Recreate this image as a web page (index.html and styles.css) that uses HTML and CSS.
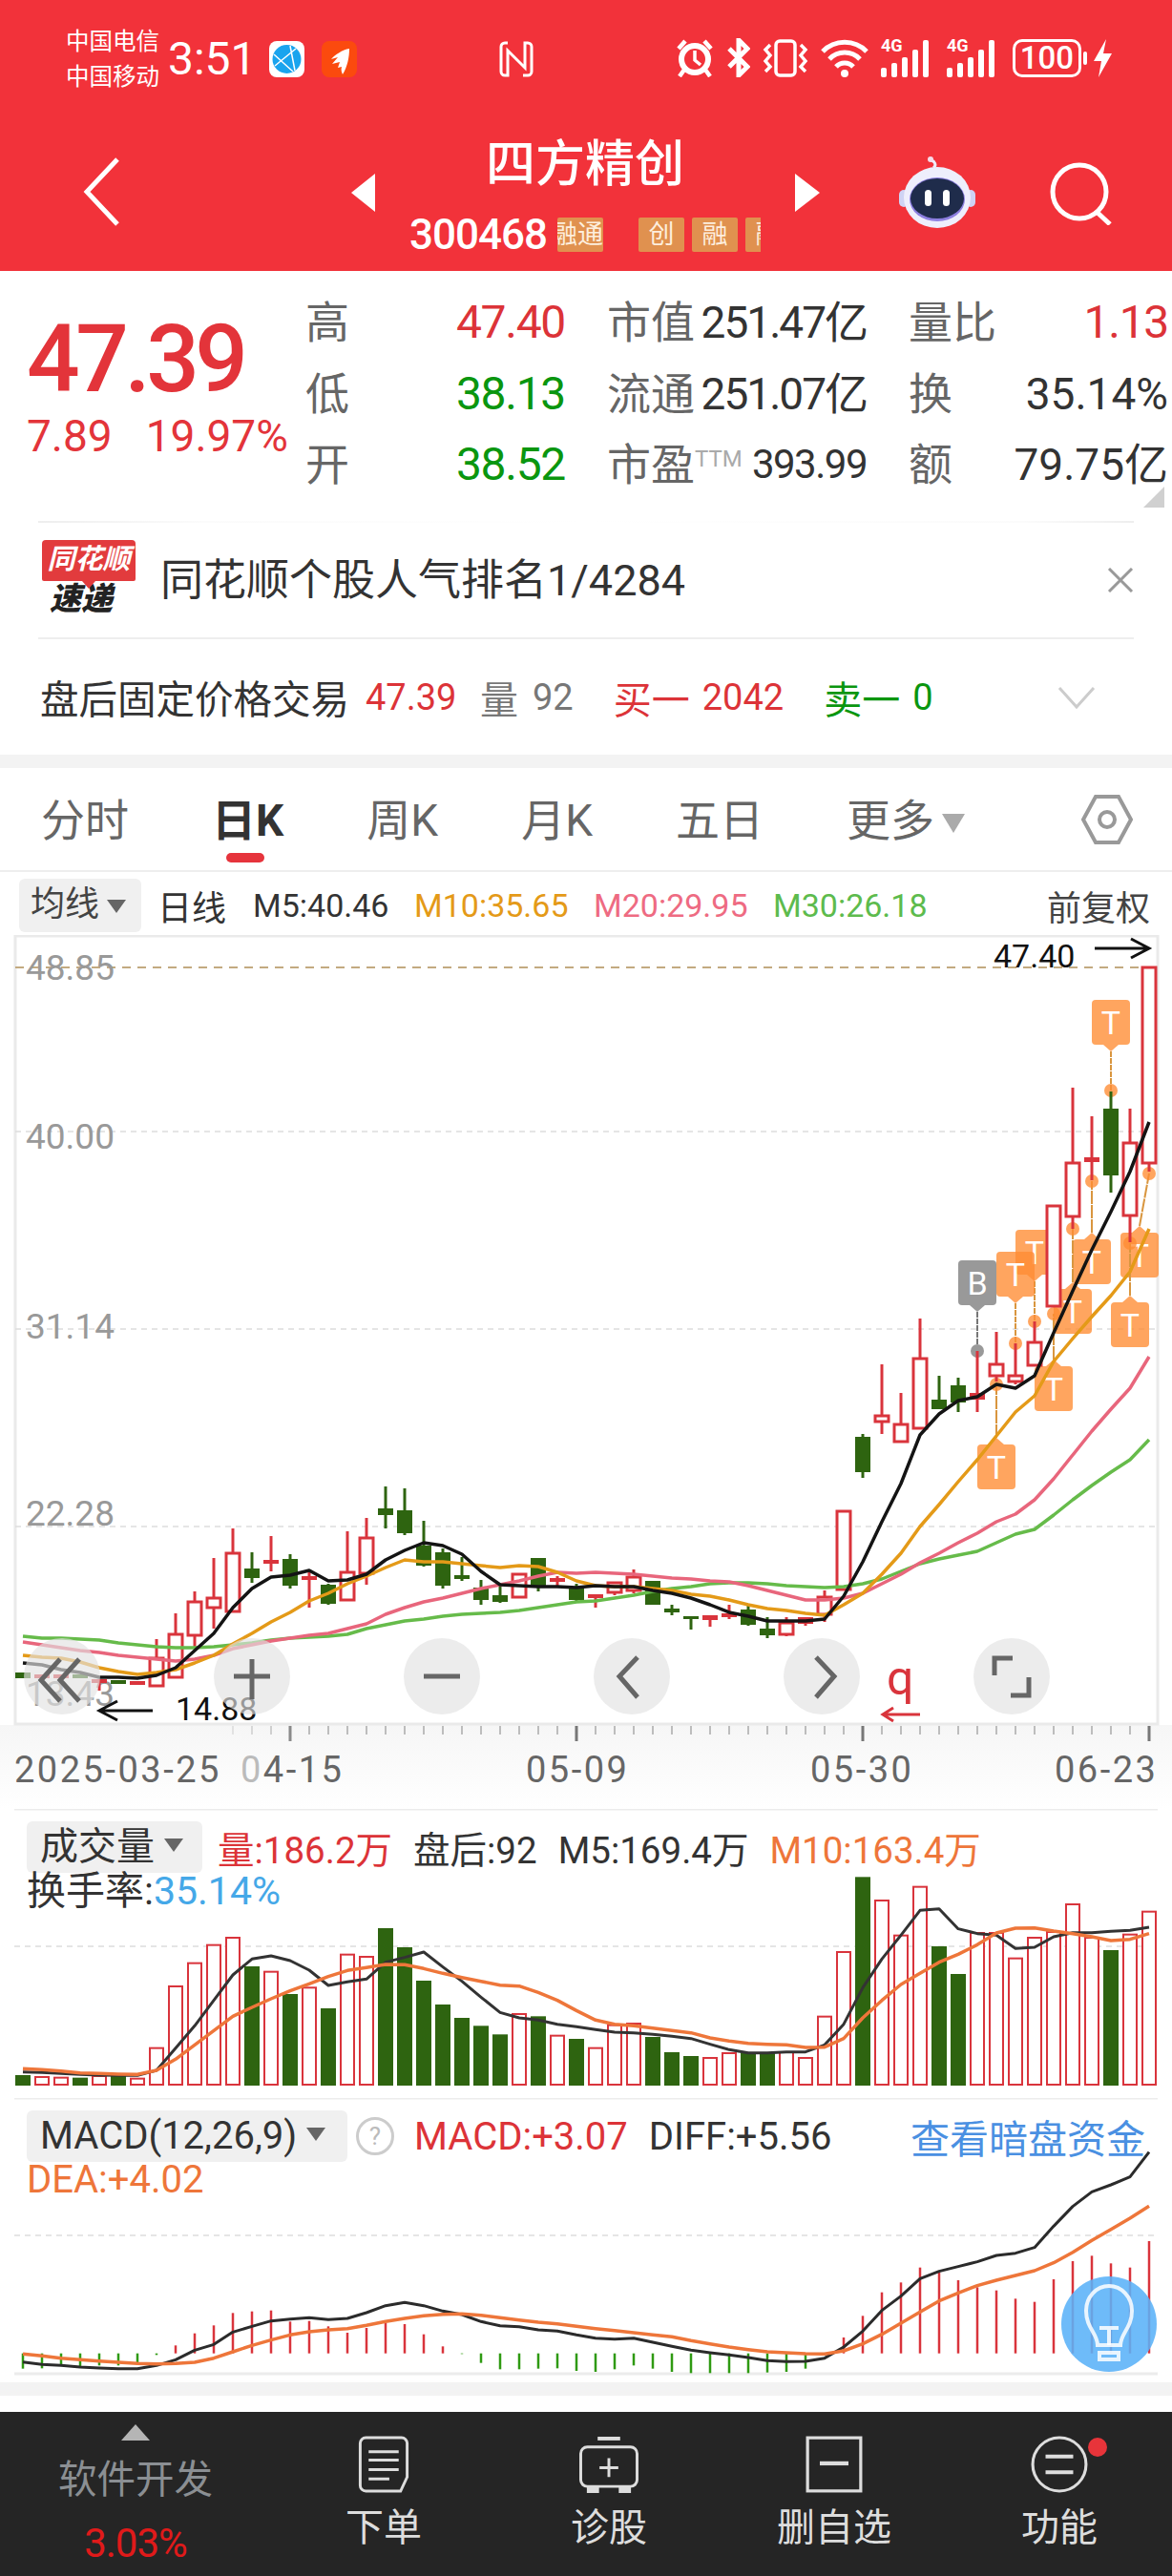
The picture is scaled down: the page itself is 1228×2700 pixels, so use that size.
FILE: index.html
```html
<!DOCTYPE html>
<html lang="zh-CN">
  <head>
    <meta charset="UTF-8" />
    <meta name="viewport" content="width=device-width, initial-scale=1.0" />
    <title>四方精创</title>
    <link rel="stylesheet" href="styles.css">
  </head>
  <body>
    <header class="top">
      <div class="status">
        <div class="status-left">
          <div class="carriers"><div>中国电信</div><div>中国移动</div></div>
          <span class="clock">3:51</span>
          <svg class="app-icon" viewBox="0 0 37 38"><rect width="37" height="38" rx="8" fill="#fff"/><circle cx="18.500" cy="19" r="15" fill="#1aa4ee"/><path d="M5 14l20 18M6 26L28 8M22 5l5 26" stroke="#fff" stroke-width="1.500" fill="none"/></svg>
          <svg class="app-icon" viewBox="0 0 37 38"><rect width="37" height="38" rx="8" fill="#fb4a0e"/><path d="M29 8C22 9 13 15 10 19l7-2-6 7 8-2-2 6 4-1c-1 3 0 6 1 8 5-8 7-18 7-27z" fill="#fff"/></svg>
        </div>
        <svg class="nfc" viewBox="0 0 36 38" fill="none" stroke="#fff" stroke-width="3"><path d="M9 2H6a4 4 0 0 0-4 4v26a4 4 0 0 0 4 4h3V10l18 18V2h3a4 4 0 0 1 4 4v26a4 4 0 0 1-4 4h-5"/></svg>
        <div class="status-right">
          <svg width="40" height="41" viewBox="0 0 40 41" fill="none" stroke="#fff"><circle cx="20" cy="22" r="14" stroke-width="6"/><path d="M20 13v10l6 5" stroke-width="3.500"/><path d="M3 11L10 3M37 11L30 3M9 33l-5 7M31 33l5 7" stroke-width="4.500"/></svg>
          <svg width="25" height="41" viewBox="0 0 25 41" fill="none" stroke="#fff" stroke-width="5"><path d="M3 11l19 19-9 9V2l9 9L3 30"/></svg>
          <svg width="48" height="40" viewBox="0 0 48 40" fill="none" stroke="#fff" stroke-width="3.500"><rect x="14" y="2" width="20" height="36" rx="4"/><path d="M8 6l-5 5 5 6-5 6 5 6-5 5M40 6l5 5-5 6 5 6-5 6 5 5"/></svg>
          <svg width="50" height="40" viewBox="0 0 50 40" fill="none" stroke="#fff" stroke-width="5"><path d="M2 13a32 32 0 0 1 46 0M9 21a22 22 0 0 1 32 0M16 29a12 12 0 0 1 18 0"/><circle cx="25" cy="36" r="4" fill="#fff" stroke="none"/></svg>
          <div class="signal"><span class="net">4G</span><i class="b1"></i><i class="b2"></i><i class="b3"></i><i class="b4"></i><i class="b5"></i></div>
          <div class="signal"><span class="net">4G</span><i class="b1"></i><i class="b2"></i><i class="b3"></i><i class="b4"></i><i class="b5"></i></div>
          <div class="battery"><span>100</span></div>
          <svg width="19" height="40" viewBox="0 0 19 40"><polygon points="13,0 0,23 8,23 5,40 19,15 10,15" fill="#fff"/></svg>
        </div>
      </div>
      <div class="titlebar">
        <svg class="back" viewBox="0 0 38 72" fill="none" stroke="#fff" stroke-width="5"><path d="M36 2L4 36l32 34"/></svg>
        <div class="arrow arrow-left"></div>
        <div class="title-stack">
          <div class="stock-name">四方精创</div>
          <div class="stock-sub">
            <span class="stock-code">300468</span>
            <div class="tags">
              <span class="tag tag-cut">融通</span>
              <span class="tag tag-gap">创</span>
              <span class="tag">融</span>
              <span class="tag">融</span>
            </div>
          </div>
        </div>
        <div class="arrow arrow-right"></div>
        <svg class="robot" viewBox="0 0 80 76">
          <path d="M36 13c4-3 1-7-2-8" stroke="#eef" stroke-width="3" fill="none"/>
          <circle cx="33" cy="4" r="3" fill="#f6dbe8"/>
          <rect x="0" y="36" width="10" height="18" rx="5" fill="#cfd3f4"/>
          <rect x="70" y="36" width="10" height="18" rx="5" fill="#cfd3f4"/>
          <ellipse cx="40" cy="44" rx="35" ry="32" fill="#eeeefc"/>
          <ellipse cx="40" cy="46" rx="29" ry="23" fill="#8d7fe0"/>
          <ellipse cx="40" cy="45" rx="28" ry="21" fill="#1f2c4b"/>
          <rect x="27" y="36" width="7" height="17" rx="3.500" fill="#fff"/>
          <rect x="46" y="36" width="7" height="17" rx="3.500" fill="#fff"/>
        </svg>
        <svg class="search" viewBox="0 0 65 66" fill="none" stroke="#fff" stroke-width="5"><circle cx="31" cy="31" r="28"/><path d="M49 52l14 13"/></svg>
      </div>
    </header>

    <section class="quote">
      <div class="price-box">
        <div class="price">47.39</div>
        <div class="change"><span>7.89</span><span>19.97%</span></div>
      </div>
      <div class="quote-grid">
        <div class="cell"><span class="lab">高</span><span class="val red">47.40</span></div>
        <div class="cell"><span class="lab">市值</span><span class="val dark tight">251.47亿</span></div>
        <div class="cell"><span class="lab">量比</span><span class="val red">1.13</span></div>
        <div class="cell"><span class="lab">低</span><span class="val green">38.13</span></div>
        <div class="cell"><span class="lab">流通</span><span class="val dark tight">251.07亿</span></div>
        <div class="cell"><span class="lab">换</span><span class="val dark">35.14%</span></div>
        <div class="cell"><span class="lab">开</span><span class="val green">38.52</span></div>
        <div class="cell"><span class="lab">市盈<sup class="ttm">TTM</sup></span><span class="val dark small">393.99</span></div>
        <div class="cell"><span class="lab">额</span><span class="val dark">79.75亿</span></div>
      </div>
      <div class="corner"></div>
    </section>

    <div class="fade-line"></div>

    <section class="notice">
      <div class="logo">
        <div class="logo-red">同花顺</div>
        <div class="logo-black">速递</div>
      </div>
      <div class="notice-text">同花顺个股人气排名1/4284</div>
      <svg class="close" viewBox="0 0 28 26" fill="none" stroke="#999" stroke-width="3"><path d="M2 1l24 24M26 1L2 25"/></svg>
    </section>

    <section class="after">
      <span class="after-title">盘后固定价格交易</span>
      <span class="red after-price">47.39</span>
      <span class="gray after-vol">量</span>
      <span class="gray after-num">92</span>
      <span class="red after-buy">买一</span>
      <span class="red after-num">2042</span>
      <span class="green after-buy">卖一</span>
      <span class="green after-num">0</span>
      <svg class="after-chev" viewBox="0 0 40 24" fill="none" stroke="#ccc" stroke-width="3"><path d="M2 2l18 20L38 2"/></svg>
    </section>

    <div class="band"></div>

    <nav class="tabs">
      <span class="tab">分时</span>
      <span class="tab active">日K</span>
      <span class="tab">周K</span>
      <span class="tab">月K</span>
      <span class="tab">五日</span>
      <span class="tab more">更多<i class="tri tri-tab"></i></span>
      <svg class="hex" viewBox="0 0 54 54" fill="none" stroke="#999" stroke-width="4"><path d="M15 3h24l13 24-13 24H15L2 27z"/><circle cx="27" cy="27" r="8"/></svg>
    </nav>

    <div class="legend">
      <span class="legend-btn">均线<i class="tri"></i></span>
      <span class="legend-day">日线</span>
      <span class="ma ma5">M5:40.46</span>
      <span class="ma ma10">M10:35.65</span>
      <span class="ma ma20">M20:29.95</span>
      <span class="ma ma30">M30:26.18</span>
      <span class="fq">前复权</span>
    </div>

    <section class="kline">
      <svg id="kline-svg" class="chart" viewBox="0 980 1228 916" width="1228" height="916">
        <defs>
          <linearGradient id="axis-bg" x1="0" y1="0" x2="0" y2="1"><stop offset="0" stop-color="#f6f6f6"/><stop offset="1" stop-color="#fff"/></linearGradient>
        </defs>
        <rect x="0" y="1808" width="1228" height="88" fill="url(#axis-bg)"/>
        <rect x="16" y="981" width="1197" height="826" fill="none" stroke="#eaeaea" stroke-width="3"/>
        <line class="grid-top" x1="16" y1="1014" x2="1213" y2="1014"/>
        <line class="grid" x1="16" y1="1186" x2="1213" y2="1186"/>
        <line class="grid" x1="16" y1="1393" x2="1213" y2="1393"/>
        <line class="grid" x1="16" y1="1600" x2="1213" y2="1600"/>
        <text class="scale" x="27" y="1027">48.85</text>
        <text class="scale" x="27" y="1204">40.00</text>
        <text class="scale" x="27" y="1403">31.14</text>
        <text class="scale" x="27" y="1599">22.28</text>
        <text class="scale" x="27" y="1788">13.43</text>
        <g id="marks"></g>
        <g id="candles"></g>
        <g id="ma-lines"></g>
        <text class="hilo" x="1041" y="1014">47.40</text>
        <path class="hilo-arrow" d="M1147 994h56M1185 984l19 10-19 10"/>
        <text class="hilo" x="184" y="1803">14.88</text>
        <path class="hilo-arrow" d="M160 1793h-56M123 1783l-19 10 19 10"/>
        <text class="mark-q" x="929" y="1776">q</text>
        <path class="q-arrow" d="M964 1797h-38M936 1790l-11 7 11 7"/>
        <g id="ticks"></g>
        <text class="date" x="15" y="1868">2025-03-25</text>
        <text class="date" x="252" y="1868"><tspan class="date-fade">0</tspan>4-15</text>
        <text class="date" x="551" y="1868">05-09</text>
        <text class="date" x="849" y="1868">05-30</text>
        <text class="date" x="1105" y="1868">06-23</text>
      </svg>
      <div class="zoom-btns">
        <div class="zoom-btn"><svg viewBox="0 0 80 80"><path d="M38 22L18 44l20 22M58 22L38 44l20 22"/></svg></div>
        <div class="zoom-btn"><svg viewBox="0 0 80 80"><path d="M40 22v42M21 40h38"/></svg></div>
        <div class="zoom-btn"><svg viewBox="0 0 80 80"><path d="M21 40h38"/></svg></div>
        <div class="zoom-btn"><svg viewBox="0 0 80 80"><path d="M46 20L27 40l19 22"/></svg></div>
        <div class="zoom-btn"><svg viewBox="0 0 80 80"><path d="M34 20l19 20-19 22"/></svg></div>
        <div class="zoom-btn"><svg viewBox="0 0 80 80"><path d="M22 39V21h19M58 41v19H39"/></svg></div>
      </div>
    </section>

    <section class="volume">
      <svg id="vol-svg" class="chart" viewBox="0 1896 1228 303" width="1228" height="303">
        <line class="panel-line" x1="15" y1="1896" x2="1213" y2="1896"/>
        <line class="grid" x1="15" y1="2040" x2="1213" y2="2040"/>
        <g id="vol-bars"></g>
        <g id="vol-lines"></g>
      </svg>
      <div class="panel-head">
        <div class="head-row">
          <span class="panel-btn btn-vol">成交量<i class="tri tri-small"></i></span>
          <span class="red">量:186.2万</span>
          <span class="dark">盘后:92</span>
          <span class="dark">M5:169.4万</span>
          <span class="orange">M10:163.4万</span>
        </div>
        <div class="head-row2 turnover"><span class="dark">换手率:</span><span class="blue">35.14%</span></div>
      </div>
    </section>

    <section class="macd">
      <svg id="macd-svg" class="chart" viewBox="0 2199 1228 298" width="1228" height="298">
        <line class="panel-line" x1="15" y1="2199" x2="1213" y2="2199"/>
        <line class="panel-line" x1="15" y1="2488" x2="1213" y2="2488"/>
        <line class="grid" x1="15" y1="2343" x2="1213" y2="2343"/>
        <g id="macd-bars"></g>
        <g id="macd-lines"></g>
      </svg>
      <div class="panel-head panel-head-macd">
        <div class="head-row">
          <span class="panel-btn btn-macd">MACD(12,26,9)<i class="tri tri-small"></i></span>
          <span class="help">?</span>
          <span class="red">MACD:+3.07</span>
          <span class="dark">DIFF:+5.56</span>
          <span class="dark-pool">查看暗盘资金</span>
        </div>
        <div class="head-row2"><span class="orange">DEA:+4.02</span></div>
      </div>
      <div class="bulb">
        <svg viewBox="0 0 100 100" fill="none" stroke="#fff" stroke-width="4" stroke-opacity=".85"><path d="M38 72c0-12-12-18-12-36a24 26 0 0 1 48 0c0 18-12 24-12 36z"/><path d="M40 54h20M50 54v18M40 80h20v7H40z"/></svg>
      </div>
    </section>

    <div class="band band-bottom"></div>
    <div class="spacer"></div>

    <footer class="bottom">
      <div class="sector">
        <i class="tri-up"></i>
        <div class="sector-name">软件开发</div>
        <div class="sector-pct">3.03%</div>
      </div>
      <div class="action">
        <svg class="action-icon" viewBox="0 0 54 61" fill="none" stroke="#ddd" stroke-width="3"><path d="M8 2h38a6 6 0 0 1 6 6v36l-7 15H8a6 6 0 0 1-6-6V8a6 6 0 0 1 6-6z"/><path d="M11 17h32M11 26h32M11 36h32M11 46h22"/></svg>
        <span>下单</span>
      </div>
      <div class="action">
        <svg class="action-icon" viewBox="0 0 64 61" fill="none" stroke="#ddd" stroke-width="3"><path d="M20 3h24" stroke-width="4"/><rect x="2" y="12" width="60" height="42" rx="7"/><path d="M32 24v20M22 34h20"/><path d="M10 55v5h10v-5M44 55v5h10v-5" fill="#ddd"/></svg>
        <span>诊股</span>
      </div>
      <div class="action">
        <svg class="action-icon" viewBox="0 0 56 56" fill="none" stroke="#ddd" stroke-width="3"><rect x="2" y="2" width="52" height="52"/><path d="M14 27h28" stroke-width="4"/></svg>
        <span>删自选</span>
      </div>
      <div class="action">
        <svg class="action-icon" viewBox="0 0 58 58" fill="none" stroke="#ddd" stroke-width="3"><circle cx="29" cy="29" r="27"/><path d="M15 21h28M15 37h28" stroke-width="4"/></svg>
        <span>功能</span>
        <i class="dot"></i>
      </div>
    </footer>

    <script src="chart.js"></script>
  </body>
</html>
```

FILE: styles.css
```css
* {
  box-sizing: border-box;
}

html, body {
  margin: 0;
  padding: 0;
}

body {
  width: 1228px;
  height: 2700px;
  overflow: hidden;
  background: #fff;
  font-family: Roboto, "Noto Sans CJK SC", sans-serif;
  color: #333;
}

.red { color: #dc3338; }
.green { color: #0a960f; }
.dark { color: #333; }
.gray { color: #777; }
.orange { color: #ee763a; }
.blue { color: #45a8e8; }

/* header */
.top {
  height: 284px;
  background: #f2323a;
  color: #fff;
}

.status {
  height: 120px;
  padding: 25px 63px 0 69px;
  display: flex;
  justify-content: space-between;
  align-items: flex-start;
}

.status-left {
  display: flex;
  align-items: center;
}

.carriers {
  font-size: 24.500px;
  line-height: 37px;
  width: 107px;
  white-space: nowrap;
}

.clock {
  font-size: 48px;
  line-height: 74px;
  width: 106px;
}

.app-icon {
  width: 37px;
  height: 38px;
}

.app-icon + .app-icon {
  margin-left: 18px;
}

.nfc {
  width: 36px;
  height: 38px;
  margin-top: 18px;
}

.status-right {
  display: flex;
  align-items: center;
  gap: 13px;
  margin-top: 15px;
}

.signal {
  position: relative;
  width: 56px;
  height: 40px;
  display: flex;
  align-items: flex-end;
  gap: 5px;
}

.signal i {
  display: block;
  width: 6px;
  background: #fff;
  border-radius: 2px;
}

.signal .b1 { height: 10px; }
.signal .b2 { height: 15px; }
.signal .b3 { height: 21px; }
.signal .b4 { height: 29px; }
.signal .b5 { height: 39px; }

.net {
  position: absolute;
  left: 0;
  top: -3px;
  font-size: 18px;
  font-weight: 700;
  line-height: 20px;
}

.battery {
  position: relative;
  width: 72px;
  height: 40px;
  border: 3px solid #fff;
  border-radius: 10px;
  text-align: center;
  font-size: 33px;
  line-height: 34px;
  font-weight: 500;
}

.battery::after {
  content: "";
  position: absolute;
  right: -9px;
  top: 10px;
  width: 4px;
  height: 14px;
  background: #fff;
  border-radius: 2px;
}

.titlebar {
  height: 164px;
  display: flex;
  align-items: flex-start;
  padding-left: 87px;
}

.back {
  width: 38px;
  height: 72px;
  margin-top: 45px;
}

.arrow {
  width: 0;
  height: 0;
  margin-top: 62px;
  border-top: 20px solid transparent;
  border-bottom: 20px solid transparent;
}

.arrow-left {
  margin-left: 243px;
  border-right: 25px solid #fff;
}

.arrow-right {
  border-left: 26px solid #fff;
}

.title-stack {
  width: 440px;
  display: flex;
  flex-direction: column;
  align-items: center;
}

.stock-name {
  font-size: 52px;
  line-height: 60px;
  margin-top: 23px;
  height: 69px;
  font-weight: 500;
}

.stock-sub {
  width: 368px;
  display: flex;
  align-items: center;
  height: 40px;
  margin-top: 14px;
}

.stock-code {
  font-size: 44px;
  line-height: 40px;
  width: 141px;
  flex: none;
  letter-spacing: -1px;
  font-weight: 500;
  white-space: nowrap;
}

.tags {
  margin-left: 14px;
  width: 213px;
  overflow: hidden;
  display: flex;
  gap: 8px;
  flex: none;
}

.tag {
  flex: none;
  width: 48px;
  height: 36px;
  background: #e0914f;
  border-radius: 2px;
  color: #fdeedd;
  font-size: 27px;
  line-height: 36px;
  text-align: center;
  white-space: nowrap;
}

.tag-cut {
  width: 48px;
  direction: rtl;
  overflow: hidden;
}

.tag-gap {
  margin-left: 29px;
}

.robot {
  width: 80px;
  height: 76px;
  margin: 43px 0 0 83px;
}

.search {
  width: 65px;
  height: 66px;
  margin: 50px 0 0 78px;
}

/* quote block */
.quote {
  position: relative;
  height: 262px;
  display: flex;
}

.price-box {
  width: 320px;
  padding-left: 28px;
}

.price {
  color: #e3343a;
  font-size: 98px;
  line-height: 84px;
  font-weight: 500;
  margin-top: 51px;
  letter-spacing: -4.500px;
}

.change {
  color: #e3343a;
  font-size: 46px;
  line-height: 50px;
  margin-top: 13px;
  display: flex;
  gap: 35px;
  white-space: nowrap;
}

.quote-grid {
  display: grid;
  grid-template-columns: repeat(3, 272px);
  grid-auto-rows: 74.500px;
  column-gap: 44px;
  padding-top: 17px;
}

.cell {
  display: flex;
  justify-content: space-between;
  align-items: center;
  white-space: nowrap;
}

.lab {
  font-size: 46px;
  color: #666;
  line-height: 60px;
}

.val {
  font-size: 48px;
  line-height: 60px;
  letter-spacing: -1.300px;
}

.val.dark {
  font-size: 46px;
  letter-spacing: 0;
}

.val.tight {
  letter-spacing: -2px;
}

.val.small {
  font-size: 42px;
  letter-spacing: -1.500px;
}

.ttm {
  font-size: 24px;
  color: #aaa;
  line-height: 0;
  vertical-align: 14px;
}

.corner {
  position: absolute;
  right: 8px;
  top: 226px;
  width: 0;
  height: 0;
  border-left: 22px solid transparent;
  border-bottom: 22px solid #d0d0d0;
}

.fade-line {
  height: 2px;
  margin: 0 40px;
  background: linear-gradient(to right, #eee, #fbfbfb 15%, #fff 50%, #fbfbfb 90%, #eee);
}

/* notice */
.notice {
  height: 122px;
  margin: 0 40px;
  display: flex;
  align-items: center;
  border-bottom: 2px solid #eee;
}

.logo {
  width: 98px;
  margin: 0 0 6px 4px;
  flex: none;
}

.logo-red {
  position: relative;
  height: 43px;
  background: #e23b3d;
  border-radius: 4px 4px 2px 2px;
  color: #fff;
  font-size: 29px;
  line-height: 40px;
  font-weight: 700;
  font-style: italic;
  text-align: center;
}

.logo-red::after {
  content: "";
  position: absolute;
  left: 42px;
  bottom: -8px;
  border-left: 7px solid transparent;
  border-right: 7px solid transparent;
  border-top: 8px solid #e23b3d;
}

.logo-black {
  color: #222;
  font-size: 33px;
  line-height: 34px;
  font-weight: 900;
  font-style: italic;
  padding-left: 8px;
  margin-top: 2px;
}

.notice-text {
  margin-left: 26px;
  margin-top: 2px;
  font-size: 45px;
  line-height: 60px;
  color: #333;
  white-space: nowrap;
}

.close {
  width: 28px;
  height: 26px;
  margin-left: auto;
}

/* after hours */
.after {
  height: 121px;
  padding: 0 40px 0 42px;
  display: flex;
  align-items: center;
  font-size: 40px;
  white-space: nowrap;
}

.after-title { width: 341px; color: #333; font-size: 40.500px; }
.after-price { width: 120px; font-size: 38px; }
.after-vol { width: 55px; }
.after-num { font-size: 38px; margin-right: 42px; }
.after-buy { width: 93px; }

.after-chev {
  width: 40px;
  height: 24px;
  margin-left: 88px;
}

.band {
  height: 14px;
  background: #f3f3f3;
}

/* tabs */
.tabs {
  height: 109px;
  padding: 0 41px 0 43px;
  display: flex;
  align-items: center;
  gap: 87px;
  border-bottom: 2px solid #eee;
}

.tab {
  position: relative;
  font-size: 46px;
  line-height: 60px;
  color: #666;
  white-space: nowrap;
  margin-top: 2px;
}

.tab.active {
  color: #333;
  font-weight: 700;
}

.tab.active::after {
  content: "";
  position: absolute;
  left: 15px;
  right: 20px;
  top: 64px;
  height: 10px;
  border-radius: 5px;
  background: #e6343c;
}

.tri {
  display: inline-block;
  width: 0;
  height: 0;
  margin-left: 8px;
  vertical-align: middle;
  border-left: 10px solid transparent;
  border-right: 10px solid transparent;
  border-top: 14px solid #666;
}

.tri-tab {
  margin-left: 8px;
  border-left-width: 12px;
  border-right-width: 12px;
  border-top: 20px solid #aaa;
}

.tri-small {
  margin-left: 10px;
  margin-top: -8px;
}

.hex {
  width: 54px;
  height: 54px;
  margin-left: auto;
}

/* legend */
.legend {
  height: 66px;
  padding: 4px 23px 0 20px;
  display: flex;
  align-items: center;
  font-size: 34px;
  white-space: nowrap;
}

.legend-btn {
  width: 128px;
  height: 56px;
  background: #f0f0f0;
  border-radius: 6px;
  padding-left: 12px;
  font-size: 36px;
  line-height: 54px;
  color: #444;
}

.legend-day { margin-left: 17px; width: 100px; color: #333; font-size: 36px; }
.ma { width: 188px; }
.ma5 { width: 169px; color: #333; }
.ma10 { color: #e49a18; }
.ma20 { color: #ee6b82; }
.ma30 { color: #5dbb4d; width: 170px; }
.fq { margin-left: auto; color: #444; font-size: 36px; }

/* charts */
.kline,
.volume,
.macd {
  position: relative;
}

.kline { height: 916px; }
.volume { height: 303px; }
.macd { height: 298px; }

.chart {
  display: block;
}

.grid {
  stroke: #ddd;
  stroke-width: 1.500;
  stroke-dasharray: 6 5;
}

.grid-top {
  stroke: #c3aa80;
  stroke-width: 2;
  stroke-dasharray: 9 7;
}

.panel-line {
  stroke: #ececec;
  stroke-width: 3;
}

.scale {
  font-size: 37px;
  fill: #999;
}

.hilo {
  font-size: 34px;
  fill: #111;
}

.hilo-arrow {
  fill: none;
  stroke: #111;
  stroke-width: 3;
}

.mark-q {
  font-size: 50px;
  fill: #d9343c;
}

.q-arrow {
  fill: none;
  stroke: #d9343c;
  stroke-width: 3;
}

.date {
  font-size: 38px;
  fill: #666;
  letter-spacing: 2.500px;
}

.date-fade {
  fill: #bbb;
}

.marker-label {
  font-size: 34px;
  fill: #fff;
  text-anchor: middle;
}

.zoom-btns {
  position: absolute;
  left: 25px;
  top: 737px;
  display: flex;
  gap: 119px;
}

.zoom-btn {
  width: 80px;
  height: 80px;
  border-radius: 50%;
  background: rgba(226, 226, 226, 0.65);
}

.zoom-btn svg {
  display: block;
  width: 80px;
  height: 80px;
  fill: none;
  stroke: #666;
  stroke-width: 5;
}

.panel-head {
  position: absolute;
  left: 28px;
  top: 13px;
  right: 28px;
  font-size: 38.500px;
  white-space: nowrap;
}

.panel-head-macd {
  font-size: 40px;
}

.head-row {
  display: flex;
  align-items: center;
  gap: 22px;
  height: 54px;
}

.head-row2 {
  line-height: 40px;
  margin-top: -1px;
}

.turnover {
  font-size: 41px;
}

.panel-btn {
  flex: none;
  height: 54px;
  line-height: 54px;
  background: #f0f0f0;
  border-radius: 6px;
  padding-left: 14px;
  color: #333;
  font-size: 40px;
}

.btn-vol {
  width: 184px;
  margin-right: -6px;
}

.btn-macd {
  width: 336px;
  padding-left: 14px;
  margin-right: -13px;
}

.help {
  flex: none;
  width: 40px;
  height: 40px;
  margin-right: -1px;
  border: 3px solid #ccc;
  border-radius: 50%;
  color: #bbb;
  font-size: 26px;
  line-height: 34px;
  text-align: center;
}

.dark-pool {
  margin-left: auto;
  color: #4a90e2;
  font-size: 41px;
}

.bulb {
  position: absolute;
  left: 1112px;
  top: 187px;
  width: 100px;
  height: 100px;
  border-radius: 50%;
  background: rgba(90, 178, 248, 0.88);
}

.bulb svg {
  display: block;
  width: 100px;
  height: 100px;
}

.band-bottom {
  height: 14px;
}

.spacer {
  height: 17px;
}

/* bottom bar */
.bottom {
  position: relative;
  height: 172px;
  background: #252525;
  display: grid;
  grid-template-columns: 284px repeat(4, 236px);
}

.sector {
  display: flex;
  flex-direction: column;
  align-items: center;
  padding-top: 13px;
}

.tri-up {
  width: 0;
  height: 0;
  border-left: 15px solid transparent;
  border-right: 15px solid transparent;
  border-bottom: 17px solid #b5b5b5;
}

.sector-name {
  margin-top: 17px;
  color: #8b8f93;
  font-size: 40.500px;
  line-height: 48px;
}

.sector-pct {
  margin-top: 20px;
  color: #e01a1a;
  font-size: 42px;
  line-height: 46px;
  letter-spacing: -1px;
}

.action {
  position: relative;
  display: flex;
  flex-direction: column;
  align-items: center;
  justify-content: flex-end;
  padding-bottom: 25px;
  color: #ddd;
  font-size: 40px;
  line-height: 50px;
}

.action-icon {
  height: 60px;
  width: 64px;
  margin-bottom: 12px;
}

.dot {
  position: absolute;
  left: 148px;
  top: 27px;
  width: 20px;
  height: 20px;
  border-radius: 50%;
  background: #e8343a;
}
```

FILE: chart.js
```js
// kline, volume and macd panels drawn from the numbers read off the day chart
const NS = "http://www.w3.org/2000/svg";
const RED = "#d9343c";
const DARKGREEN = "#2e6410";

function add(parent, tag, attrs, text) {
  const node = document.createElementNS(NS, tag);
  for (const k in attrs) node.setAttribute(k, attrs[k]);
  if (text) node.textContent = text;
  parent.appendChild(node);
  return node;
}

function xOf(i) {
  return 24 + 20 * i;
}

function line(parent, ys, color, width) {
  const pts = ys.map((y, i) => xOf(i) + "," + y).join(" ");
  add(parent, "polyline", { points: pts, fill: "none", stroke: color, "stroke-width": width, "stroke-linejoin": "round" });
}

// [up?, top, bottom, high, low]
const candles = [
  [0,1753,1759,1753,1759],[1,1755,1759,1755,1759],[1,1755,1759,1755,1759],[0,1755,1759,1755,1759],
  [1,1760,1764,1760,1772],[0,1761,1765,1761,1765],[1,1762,1766,1762,1766],[1,1737,1768,1718,1768],
  [1,1712,1759,1691,1759],[1,1678,1715,1668,1727],[1,1674,1686,1633,1707],[1,1627,1690,1602,1690],
  [0,1644,1654,1627,1659],[1,1635,1639,1610,1647],[0,1634,1662,1629,1665],[1,1652,1656,1645,1685],
  [0,1661,1681,1660,1682],[1,1647,1678,1605,1678],[1,1611,1650,1591,1661],[0,1581,1588,1558,1602],
  [0,1583,1607,1560,1609],[0,1620,1641,1594,1642],[0,1627,1662,1623,1665],[0,1651,1655,1632,1657],
  [0,1664,1677,1656,1682],[0,1672,1679,1663,1680],[1,1649,1675,1649,1675],[0,1633,1663,1633,1668],
  [1,1654,1658,1652,1663],[0,1663,1677,1660,1679],[1,1671,1675,1671,1685],[1,1658,1670,1658,1672],
  [1,1652,1668,1645,1670],[0,1657,1682,1657,1682],[0,1686,1690,1682,1693],[0,1694,1697,1694,1708],
  [1,1693,1698,1693,1705],[1,1691,1695,1682,1697],[0,1687,1703,1683,1704],[0,1707,1714,1695,1717],
  [1,1700,1714,1695,1715],[1,1695,1702,1695,1704],[1,1673,1693,1667,1700],[1,1583,1667,1583,1667],
  [0,1506,1543,1503,1549],[1,1483,1491,1430,1503],[1,1492,1512,1460,1512],[1,1423,1498,1382,1498],
  [0,1467,1477,1442,1477],[0,1452,1470,1444,1480],[1,1460,1467,1416,1480],[1,1429,1443,1396,1448],
  [1,1441,1449,1408,1451],[1,1406,1432,1385,1432],[1,1263,1370,1263,1370],[1,1218,1276,1140,1288],
  [1,1213,1218,1170,1237],[0,1162,1232,1144,1250],[1,1197,1275,1162,1302],[1,1013,1220,1013,1228]
];

const ma5 = [1743,1745,1750,1753,1758,1758,1759,1756,1748,1730,1712,1685,1665,1653,1651,1646,1657,1656,1650,1635,1625,1617,1620,1629,1647,1661,1662,1663,1663,1664,1662,1663,1663,1667,1670,1675,1682,1690,1694,1699,1699,1699,1697,1673,1637,1595,1555,1504,1482,1468,1464,1451,1455,1442,1397,1353,1310,1270,1228,1176];
const ma10 = [1735,1737,1738,1742,1748,1752,1755,1753,1750,1743,1735,1723,1712,1700,1690,1678,1670,1660,1652,1643,1635,1637,1637,1639,1641,1643,1641,1642,1648,1657,1662,1663,1663,1665,1667,1671,1673,1677,1682,1686,1688,1691,1693,1682,1670,1650,1628,1600,1577,1553,1530,1505,1480,1463,1427,1403,1380,1358,1333,1288];
const ma20 = [1721,1724,1727,1730,1732,1735,1737,1739,1741,1739,1735,1728,1724,1720,1717,1714,1712,1707,1702,1692,1685,1679,1675,1670,1665,1661,1657,1652,1648,1649,1648,1649,1650,1652,1654,1655,1657,1658,1662,1667,1672,1677,1677,1675,1670,1660,1650,1638,1628,1617,1607,1595,1587,1572,1550,1525,1500,1477,1455,1422];
const ma30 = [1715,1717,1717,1718,1719,1722,1724,1726,1727,1727,1726,1724,1722,1719,1717,1716,1715,1713,1707,1703,1699,1697,1694,1692,1691,1690,1688,1685,1682,1679,1678,1675,1672,1668,1665,1663,1660,1659,1659,1660,1662,1663,1664,1663,1660,1655,1647,1639,1634,1630,1626,1617,1608,1603,1588,1572,1557,1543,1530,1509];

function marker(g, cx, top, label, down, dotX, dotY) {
  const color = label === "B" ? "#999" : "rgba(255,140,50,.78)";
  const stem = label === "B" ? "#777" : "#d9963f";
  const tip = down ? top + 54 : top - 7;
  add(g, "line", { x1: cx, y1: tip, x2: dotX, y2: dotY, stroke: stem, "stroke-width": 2, "stroke-dasharray": down ? "6 1" : "14 1" });
  add(g, "circle", { cx: dotX, cy: dotY, r: 7, fill: color });
  const p = down
    ? `M${cx - 8} ${top + 47}L${cx} ${top + 54}L${cx + 8} ${top + 47}Z`
    : `M${cx - 8} ${top}L${cx} ${top - 7}L${cx + 8} ${top}Z`;
  add(g, "path", { d: p, fill: color });
  add(g, "rect", { x: cx - 20, y: top, width: 40, height: 47, rx: 4, fill: color });
  add(g, "text", { x: cx, y: top + 36, class: "marker-label" }, label);
}

function drawKline() {
  const marks = document.getElementById("marks");
  marker(marks, 1164, 1048, "T", true, 1164, 1143);
  marker(marks, 1084, 1289, "T", true, 1084, 1385);
  marker(marks, 1194, 1292, "T", false, 1204, 1230);
  marker(marks, 1144, 1299, "T", false, 1144, 1238);
  marker(marks, 1064, 1312, "T", true, 1064, 1408);
  marker(marks, 1024, 1321, "B", true, 1024, 1416);
  marker(marks, 1124, 1351, "T", false, 1124, 1288);
  marker(marks, 1184, 1365, "T", false, 1184, 1303);
  marker(marks, 1104, 1432, "T", false, 1104, 1377);
  marker(marks, 1044, 1514, "T", false, 1044, 1451);

  const g = document.getElementById("candles");
  candles.forEach((c, i) => {
    const x = xOf(i);
    const color = c[0] ? RED : DARKGREEN;
    add(g, "line", { x1: x, y1: c[3], x2: x, y2: c[4], stroke: color, "stroke-width": 3 });
    const h = c[2] - c[1];
    if (c[0] && h > 7) {
      add(g, "rect", { x: x - 7, y: c[1] + 1, width: 14, height: h - 2, fill: "#fff", stroke: color, "stroke-width": 3 });
    } else {
      add(g, "rect", { x: x - 8, y: c[1], width: 16, height: h, fill: color });
    }
  });

  const lines = document.getElementById("ma-lines");
  line(lines, ma30, "#66bb4a", 3.5);
  line(lines, ma20, "#e8667c", 3.5);
  line(lines, ma10, "#e49a18", 3.5);
  line(lines, ma5, "#141414", 3.5);

  const ticks = document.getElementById("ticks");
  for (let x = 244; x <= 1204; x += 20) {
    const major = (x - 304) % 300 === 0;
    const fade = Math.min(1, 0.35 + (x - 244) / 120);
    add(ticks, "line", {
      x1: x, y1: 1809, x2: x, y2: major ? 1825 : 1818,
      stroke: major ? "#777" : "#aaa", "stroke-width": major ? 3 : 1.5, opacity: fade
    });
  }
}

// volume bars, tops are crop rows converted with 1880 + v / 3
const volTop = [885,888,890,893,885,888,893,797,603,530,473,450,543,557,630,607,675,503,510,423,483,588,663,705,730,757,690,700,758,771,797,725,720,765,813,825,828,813,815,815,810,828,698,495,262,333,443,290,480,567,435,435,515,450,432,345,450,492,440,368];
const volUp = "011010111111010101100000001010111000110011110111001111111011".split("");
const volM5 = [875,877,880,883,885,886,886,870,800,730,650,570,520,510,525,555,603,592,583,530,515,498,545,590,640,688,705,712,725,733,742,750,752,757,763,770,788,805,815,815,812,812,790,725,610,520,445,367,362,425,440,445,487,483,450,437,437,433,430,420];
const volM10 = [865,868,872,878,880,882,883,870,835,790,745,700,672,645,620,598,575,556,547,537,538,550,565,578,590,602,605,625,650,682,712,725,730,737,745,752,768,778,785,788,790,798,797,770,705,650,600,565,530,505,475,438,423,422,432,440,450,462,458,440];

function drawVolume() {
  const toY = v => 1880 + v / 3;
  const g = document.getElementById("vol-bars");
  volTop.forEach((v, i) => {
    const up = volUp[i] === "1";
    const y = toY(v);
    if (up) {
      add(g, "rect", { x: xOf(i) - 7, y: y + 1, width: 14, height: 2186 - y - 2, fill: "#fff", stroke: RED, "stroke-width": 2 });
    } else {
      add(g, "rect", { x: xOf(i) - 8, y: y, width: 16, height: 2186 - y, fill: DARKGREEN });
    }
  });
  const lines = document.getElementById("vol-lines");
  line(lines, volM5.map(toY), "#333", 3);
  line(lines, volM10.map(toY), "#ee763a", 3.5);
}

const macdBars = [878,877,870,870,868,868,860,835,805,767,742,703,698,695,730,728,745,765,750,735,738,770,808,832,860,880,880,878,877,885,888,880,868,878,888,892,892,892,892,890,888,878,835,780,712,638,607,560,575,600,622,632,658,668,597,540,523,547,560,477];
const diff = [857,865,868,873,876,878,878,868,850,820,802,763,745,728,722,718,724,720,702,680,670,680,697,708,730,743,746,756,760,772,782,785,782,795,808,820,828,835,843,853,856,855,845,810,760,695,650,595,572,557,542,522,515,497,430,368,322,300,275,197];
const dea = [832,838,845,850,854,858,862,863,862,858,845,825,805,788,772,762,756,752,742,730,720,712,707,706,710,718,725,732,737,745,752,758,765,772,778,790,800,810,818,825,828,831,832,822,800,770,735,700,665,640,617,600,585,570,545,512,475,440,405,367];

function drawMacd() {
  const toY = v => 2190 + v / 3;
  const zero = toY(830);
  const g = document.getElementById("macd-bars");
  macdBars.forEach((v, i) => {
    const y = toY(v);
    const red = i >= 8 && i <= 22 || i >= 42;
    add(g, "line", {
      x1: xOf(i), y1: zero, x2: xOf(i), y2: red ? Math.min(y, zero) : y,
      stroke: red ? RED : "#2f9a12", "stroke-width": 2.5
    });
  });
  const lines = document.getElementById("macd-lines");
  line(lines, diff.map(toY), "#2b2b2b", 3);
  line(lines, dea.map(toY), "#ee763a", 3.5);
}

drawKline();
drawVolume();
drawMacd();
```
